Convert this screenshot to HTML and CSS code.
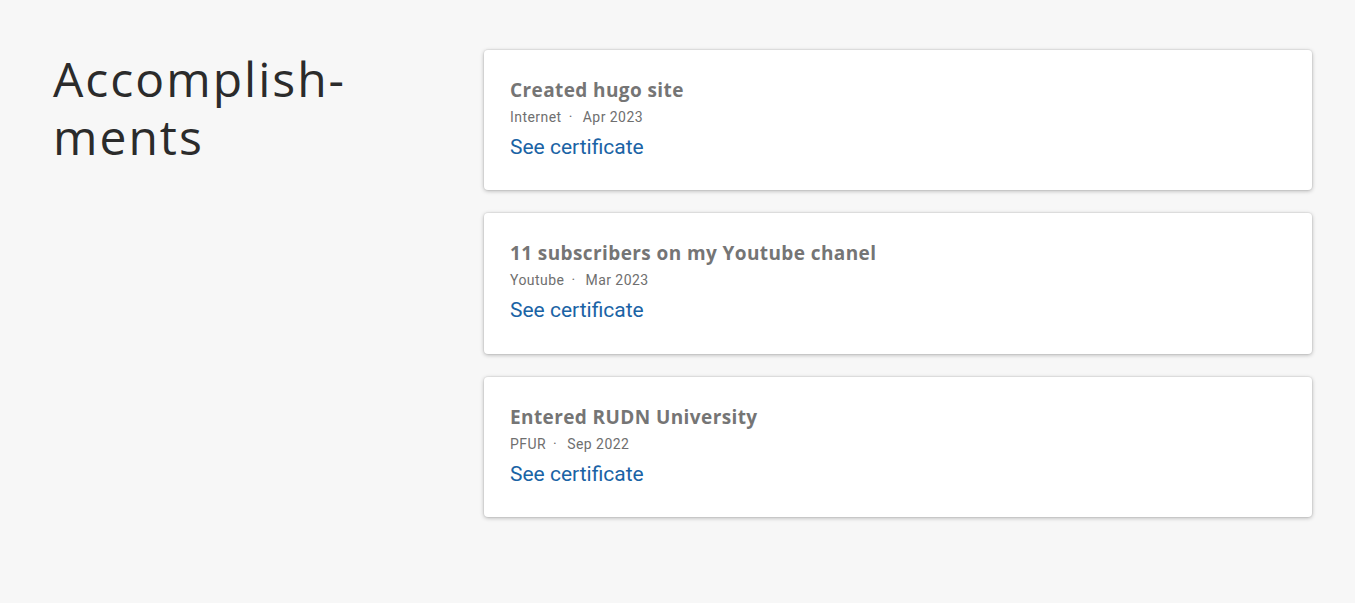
FILE: index.html
```html
<!DOCTYPE html>
<html lang="en">
<head>
<meta charset="utf-8">
<title>Accomplishments</title>
<link rel="stylesheet" href="styles.css">
</head>
<body>
<section class="section">
  <h2 class="heading">Accomplish&shy;ments</h2>
  <div class="cards">
    <article class="card">
      <h3 class="card-title">Created hugo site</h3>
      <p class="card-meta"><span>Internet</span><span class="dot">·</span><span>Apr 2023</span></p>
      <a class="card-link" href="#">See certificate</a>
    </article>
    <article class="card">
      <h3 class="card-title">11 subscribers on my Youtube chanel</h3>
      <p class="card-meta"><span>Youtube</span><span class="dot">·</span><span>Mar 2023</span></p>
      <a class="card-link" href="#">See certificate</a>
    </article>
    <article class="card">
      <h3 class="card-title">Entered RUDN University</h3>
      <p class="card-meta"><span>PFUR</span><span class="dot">·</span><span>Sep 2022</span></p>
      <a class="card-link" href="#">See certificate</a>
    </article>
  </div>
</section>
</body>
</html>
```
FILE: styles.css
```css
html, body {
  margin: 0;
  padding: 0;
  background: #f7f7f7;
  font-family: Roboto, "Liberation Sans", sans-serif;
}
.section {
  display: grid;
  grid-template-columns: 431px 828px;
  align-items: start;
  padding: 50px 0 40px 53px;
}
.heading {
  margin: 0;
  width: 340px;
  font-family: "Open Sans", "Liberation Sans", sans-serif;
  font-weight: 400;
  font-size: 48px;
  line-height: 58px;
  color: #2b2b2b;
  hyphens: manual;
  letter-spacing: 2px;
}
.cards {
  display: flex;
  flex-direction: column;
  gap: 23px;
}
.card {
  background: #fff;
  border-radius: 4px;
  box-shadow: 0 1px 4px rgba(0,0,0,0.28), 0 0 0 1px rgba(0,0,0,0.04);
  padding: 28px 26px 28px 26px;
  height: 140.4px;
  box-sizing: border-box;
}
.card-title {
  margin: 0;
  font-family: "Open Sans", "Liberation Sans", sans-serif;
  font-weight: 700;
  font-size: 19px;
  line-height: 24px;
  color: #757575;
  letter-spacing: 0.4px;
}
.card-meta {
  margin: 5px 0 0;
  font-size: 14px;
  line-height: 20px;
  color: #6f6f6f;
  letter-spacing: 0.45px;
}
.dot {
  margin: 0 10px 0 7px;
}
.card-link {
  display: inline-block;
  margin-top: 7px;
  font-size: 21px;
  line-height: 26px;
  color: #1a63a5;
  text-decoration: none;
}
```
